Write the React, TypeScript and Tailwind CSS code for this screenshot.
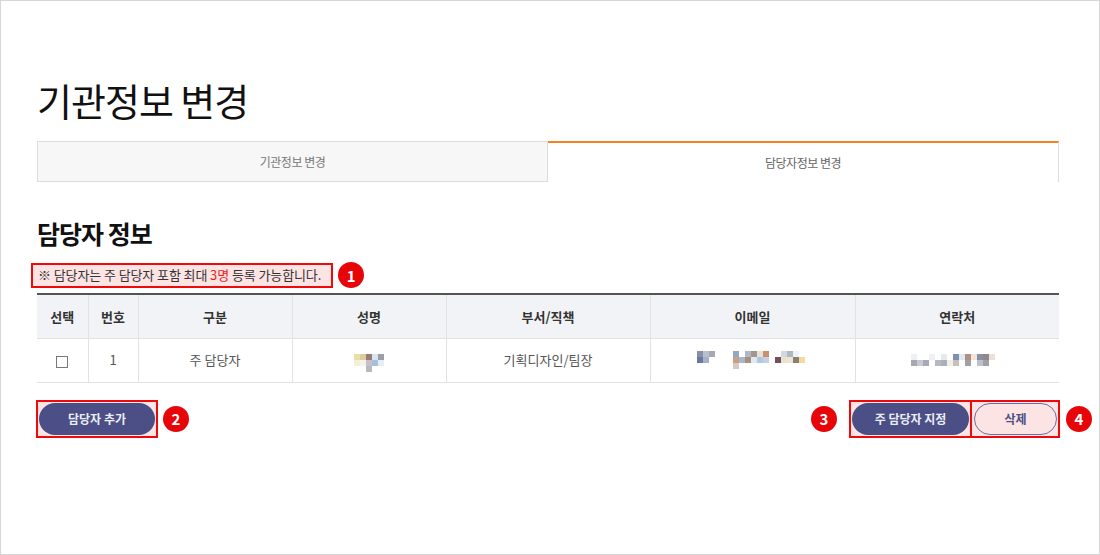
import React from 'react';

const font = "font-['Noto_Sans_CJK_KR','Noto_Sans',sans-serif]";

type Row = string[];

function Mosaic({ rows }: { rows: Row[] }) {
  return (
    <div className="inline-flex flex-col">
      {rows.map((row, i) => (
        <div key={i} className="flex">
          {row.map((c, j) => (
            <span key={j} className="block w-[6px] h-[6px]" style={{ background: c }} />
          ))}
        </div>
      ))}
    </div>
  );
}

const W = 'transparent';

const nameBlocks: Row[] = [
  [W, W, W, W, W, W],
  ['#e6dfa8', '#d8cfa0', '#9a7a72', '#d8e4f0', '#9aa0a8', W],
  ['#f4efd8', '#f8f2e4', '#c8c0c8', '#a8c0dc', '#e4ecf4', W],
  [W, W, '#b8b8c0', W, W, W]
];

const emailBlocks: Row[] = [
  ['#8890a8', '#b8c0d0', '#a8a8b0', W, W, W, '#90a8c8', W, '#b0b8c8', '#a09890', '#e8e0d0', '#c89070', W, W, '#d0d8e0', '#b0b8c0', '#eef4f8', W, W, W],
  ['#6878a0', '#a8b0c8', W, W, W, W, '#c8a088', '#a8b8c8', '#a89080', '#e0e8f0', '#b0c8e0', '#c8d0e0', W, '#705060', '#f0e0c8', '#ece4d8', '#8a8070', '#f8d8a0', W, W],
  [W, W, W, W, W, W, '#d8c8c0', W, W, W, W, W, W, W, W, W, W, W, W, W]
];

const phoneBlocks: Row[] = [
  ['#f0f0f4', W, W, '#f0f0f0', W, '#e8e8e8', W, '#8090b0', '#e0e8f0', '#b09080', '#f4e4d8', '#8890a8', '#908888', '#ece0d8', W],
  ['#a8a8b0', '#c8c8d0', '#a8a8b8', W, '#b8b8c0', '#a8b0c0', '#f0f0e8', '#c8c0b8', W, '#a0a0a8', W, '#c0c0c8', '#a0a0a8', W, W]
];

function Badge({ n }: { n: number }) {
  return (
    <span className="flex items-center justify-center w-[26px] h-[26px] rounded-full bg-[#e8050a] text-white text-[15px] font-bold leading-none">
      {n}
    </span>
  );
}

const cols = ['w-[51px]', 'w-[50px]', 'w-[154px]', 'w-[154px]', 'w-[204px]', 'w-[205px]', 'w-[204px]'];

export default function App() {
  const heads = ['선택', '번호', '구분', '성명', '부서/직책', '이메일', '연락처'];

  return (
    <div className={`${font} w-[1100px] h-[555px] border border-[#d6d6d6] bg-white pl-[36px] pr-[40px] pt-[77px]`}>
      <h1 className="text-[38px] leading-[43px] tracking-[-1px] text-[#111] font-normal">기관정보 변경</h1>

      <div className="mt-[20px] flex h-[41px] text-[12px] tracking-[-0.5px]">
        <div className="w-[511px] flex items-center justify-center bg-[#f7f7f7] border border-[#dcdcdc] text-[#777]">
          기관정보 변경
        </div>
        <div className="flex-1 flex items-center justify-center border-t-2 border-t-[#f58220] border-r border-r-[#dcdcdc] text-[#666]">
          담당자정보 변경
        </div>
      </div>

      <h2 className="mt-[36px] text-[25px] leading-[30px] font-bold tracking-[-1px] text-[#111]">담당자 정보</h2>

      <div className="mt-[14px] flex items-center -ml-[6px]">
        <div className="h-[25px] flex items-center border-2 border-[#ee0a0a] bg-[#fde4e4] pl-[5px] pr-[10px] text-[13px] tracking-[-0.1px] text-[#333]">
          ※ 담당자는 주 담당자 포함 최대&nbsp;<span className="text-[#ee1c1c]">3명</span>&nbsp;등록 가능합니다.
        </div>
        <span className="ml-[5px]">
          <Badge n={1} />
        </span>
      </div>

      <table className="mt-[5px] w-[1022px] border-collapse border-t-2 border-t-[#555] text-[13px] table-fixed">
        <colgroup>
          {cols.map((c, i) => (
            <col key={i} className={c} />
          ))}
        </colgroup>
        <thead>
          <tr className="h-[44px] bg-[#f2f3f6]">
            {heads.map((h, i) => (
              <th
                key={h}
                className={`font-bold text-[#333] border-b border-[#e2e2e2] ${i > 0 ? 'border-l' : ''} border-l-[#e2e2e2]`}
              >
                {h}
              </th>
            ))}
          </tr>
        </thead>
        <tbody>
          <tr className="h-[44px] text-[#555] text-center">
            <td className="border-b border-[#e2e2e2]">
              <span className="inline-block w-[12px] h-[12px] border border-[#777] bg-white align-middle" />
            </td>
            <td className="border-b border-l border-[#e2e2e2]">1</td>
            <td className="border-b border-l border-[#e2e2e2]">주 담당자</td>
            <td className="border-b border-l border-[#e2e2e2]">
              <div className="flex justify-center pl-[6px]">
                <Mosaic rows={nameBlocks} />
              </div>
            </td>
            <td className="border-b border-l border-[#e2e2e2]">기획디자인/팀장</td>
            <td className="border-b border-l border-[#e2e2e2]">
              <div className="flex justify-center pl-[8px]">
                <Mosaic rows={emailBlocks} />
              </div>
            </td>
            <td className="border-b border-l border-[#e2e2e2]">
              <div className="flex justify-center pr-[2px]">
                <Mosaic rows={phoneBlocks} />
              </div>
            </td>
          </tr>
        </tbody>
      </table>

      <div className="mt-[17px] flex items-center justify-between">
        <div className="flex items-center">
          <div className="border-2 border-[#ee0a0a] bg-[#fde4e4] p-[1px] -ml-[1px]">
            <button className="w-[116px] h-[32px] rounded-full bg-[#4b4f86] text-[#eceef6] text-[12px] font-bold">
              담당자 추가
            </button>
          </div>
          <span className="ml-[5px]">
            <Badge n={2} />
          </span>
        </div>

        <div className="flex items-center -mr-[33px]">
          <span className="mr-[12px]">
            <Badge n={3} />
          </span>
          <div className="border-2 border-[#ee0a0a] bg-[#fde4e4] p-[1px]">
            <button className="w-[117px] h-[32px] rounded-full bg-[#4b4f86] text-[#eceef6] text-[12px] font-bold">
              주 담당자 지정
            </button>
          </div>
          <div className="border-2 border-l-0 border-[#ee0a0a] bg-[#fde4e4] py-[1px] pl-[2px] pr-[1px]">
            <button className="w-[83px] h-[32px] rounded-full border border-[#6a6fa3] text-[#4b4f86] text-[12px] font-bold">
              삭제
            </button>
          </div>
          <span className="ml-[6px]">
            <Badge n={4} />
          </span>
        </div>
      </div>
    </div>
  );
}
